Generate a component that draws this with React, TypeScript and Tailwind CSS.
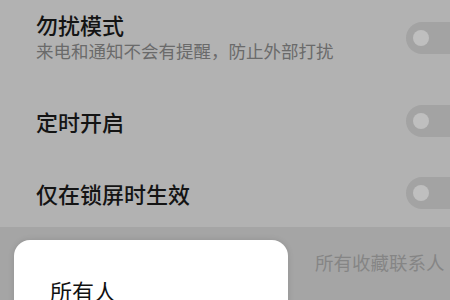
import React from 'react';

const font = { fontFamily: '"Noto Sans CJK SC", "Noto Sans", sans-serif' };

const Toggle = () => (
  <div className="w-[60px] h-[32px] rounded-full bg-[#a3a3a3] flex items-center pl-[7px] shrink-0">
    <div className="w-[16px] h-[16px] rounded-full bg-[#bfbfbf]" />
  </div>
);

export default function App() {
  return (
    <div className="w-[450px] h-[300px] overflow-hidden bg-[#b2b2b2] flex flex-col" style={font}>
      {/* Settings rows */}
      <div className="flex items-center justify-between h-[78px] shrink-0 pl-[36px] pb-[2px]">
        <div className="flex flex-col pb-[2px]">
          <span className="text-[22px] leading-[28px] font-medium text-[#141414]">勿扰模式</span>
          <span className="text-[17.5px] leading-[26px] text-[#6a6a6a]">来电和通知不会有提醒，防止外部打扰</span>
        </div>
        <div className="mr-[-16px]"><Toggle /></div>
      </div>
      <div className="flex items-center justify-between h-[86px] shrink-0 pl-[36px]">
        <span className="text-[22px] leading-[30px] font-medium text-[#141414]">定时开启</span>
        <div className="mr-[-16px]"><Toggle /></div>
      </div>
      <div className="flex items-center justify-between h-[63px] shrink-0 pl-[36px] pb-[6px]">
        <span className="text-[22px] leading-[30px] font-medium text-[#141414]">仅在锁屏时生效</span>
        <div className="mr-[-16px]"><Toggle /></div>
      </div>

      {/* Lower section with popup card */}
      <div className="flex-1 min-h-0 bg-[#a5a5a5] flex pt-[13px] pl-[14px]">
        <div className="w-[274px] h-[80px] shrink-0 bg-white rounded-t-[16px] shadow-[0_0_6px_rgba(0,0,0,0.12)] pl-[36px] pt-[35px]">
          <span className="text-[22px] leading-[30px] text-[#111]">所有人</span>
        </div>
        <div className="flex-1 pt-[9px] pl-[27px]">
          <span className="text-[18.5px] leading-[26px] text-[#858585] whitespace-nowrap">所有收藏联系人</span>
        </div>
      </div>
    </div>
  );
}
